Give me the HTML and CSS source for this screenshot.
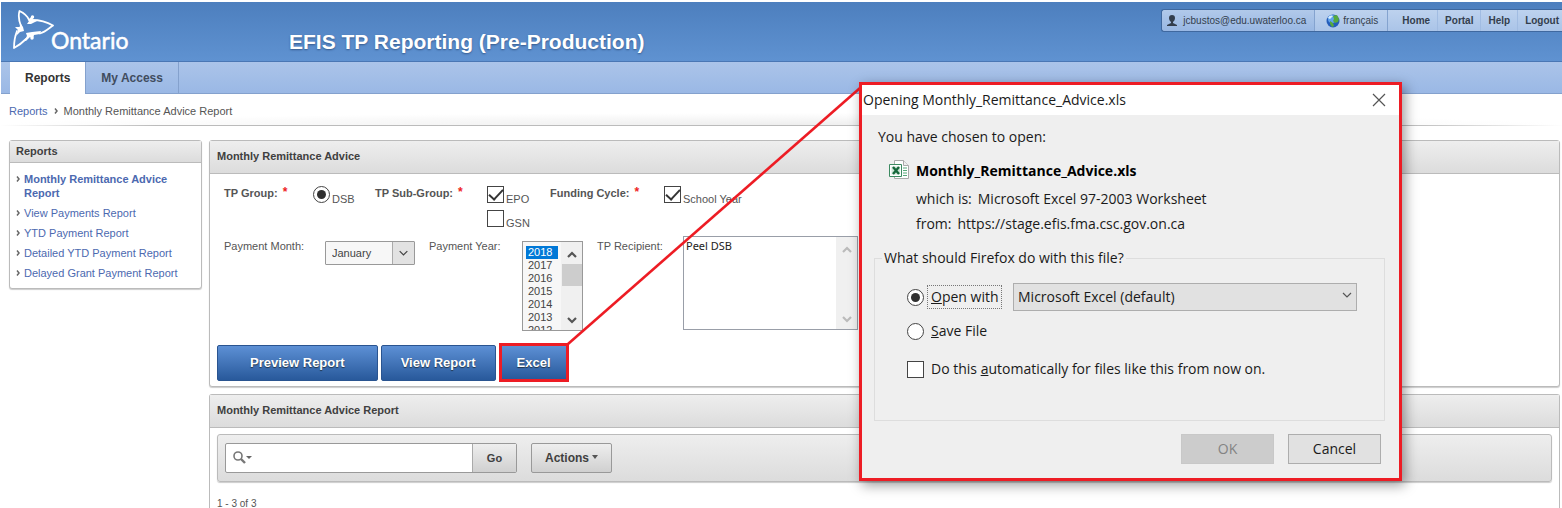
FILE: index.html
```html
<!DOCTYPE html>
<html lang="en">
<head>
<meta charset="utf-8">
<title>EFIS TP Reporting</title>
<link rel="stylesheet" href="styles.css">
</head>
<body>
<header class="banner">
  <a class="logo" href="#" aria-label="Ontario">
    <svg class="trillium" viewBox="0 0 42 40" aria-hidden="true">
      <g fill="none" stroke="#fff" stroke-width="1.8" stroke-linejoin="round" stroke-linecap="round">
        <path d="M9 16C7 11 6 6 7.500 1C12 3 15 5 17 10"/>
        <path d="M20 10C28 10 35 12 41 15.500C36 19 33 22 28 23.500"/>
        <path d="M5 21C3 26 2 32 2 38C6 36 10 33 14 29"/>
      </g>
      <g fill="#fff">
        <path d="M14 5L17 9 20 6 22 7 20 10 25 11 19 14 15 14 17 11Z"/>
        <path d="M3 17L8 17 9 14 11 17 12 21 8 22 4 26 6 20Z"/>
        <path d="M14 23L20 22 29 21 28 24 22 25 21 29 18 27 14 31 12 31 15 26Z"/>
        <circle cx="20.500" cy="7" r="1.700"/><circle cx="8.500" cy="18" r="1.700"/><circle cx="20" cy="28" r="1.700"/>
      </g>
    </svg>
    <span class="wordmark">Ontario</span>
  </a>
  <h1 class="title">EFIS TP Reporting (Pre-Production)</h1>
  <nav class="userbar" aria-label="Account">
    <span class="user">
      <svg class="person" viewBox="0 0 12 12" aria-hidden="true"><path fill="#333e4d" d="M6 0C8 0 9 1 9 3S8 6 7 7V8L11 10V11H1V10L5 8V7C4 6 3 5 3 3S4 0 6 0Z"/></svg>
      jcbustos@edu.uwaterloo.ca
    </span>
    <a class="lang" href="#">
      <svg class="globe" viewBox="0 0 14 14" aria-hidden="true"><circle cx="7" cy="7" r="6.5" fill="#245dba"/><circle cx="6" cy="5" r="4" fill="#5fa2ed"/><path fill="#56a93c" d="M7 2L11 1 13 5 12 8 9 9 7 7 8 5ZM4 7L7 9 8 12 6 13 4 10Z"/><path fill="#d9efff" d="M2 4C3 1 6 1 7 2L4 5Z"/></svg>
      français
    </a>
    <a class="userlink first" href="#">Home</a>
    <a class="userlink" href="#">Portal</a>
    <a class="userlink" href="#">Help</a>
    <a class="userlink" href="#">Logout</a>
  </nav>
</header>
<nav class="tabs" aria-label="Main">
  <a class="tab current" href="#">Reports</a>
  <a class="tab" href="#">My Access</a>
</nav>
<div class="crumbs">
  <a href="#">Reports</a>
  <svg class="chev" viewBox="0 0 4 6" aria-hidden="true"><path d="M1 0.5L3 3 1 5.5"/></svg>
  <span>Monthly Remittance Advice Report</span>
</div>
<div class="columns">
  <aside class="panel side">
    <h2 class="panel-head small">Reports</h2>
    <ul class="links">
      <li><svg class="chev" viewBox="0 0 4 6" aria-hidden="true"><path d="M1 0.5L3 3 1 5.5"/></svg><a class="active" href="#">Monthly Remittance Advice Report</a></li>
      <li><svg class="chev" viewBox="0 0 4 6" aria-hidden="true"><path d="M1 0.5L3 3 1 5.5"/></svg><a href="#">View Payments Report</a></li>
      <li><svg class="chev" viewBox="0 0 4 6" aria-hidden="true"><path d="M1 0.5L3 3 1 5.5"/></svg><a href="#">YTD Payment Report</a></li>
      <li><svg class="chev" viewBox="0 0 4 6" aria-hidden="true"><path d="M1 0.5L3 3 1 5.5"/></svg><a href="#">Detailed YTD Payment Report</a></li>
      <li><svg class="chev" viewBox="0 0 4 6" aria-hidden="true"><path d="M1 0.5L3 3 1 5.5"/></svg><a href="#">Delayed Grant Payment Report</a></li>
    </ul>
  </aside>
  <main class="content">
    <section class="panel">
      <h2 class="panel-head">Monthly Remittance Advice</h2>
      <form class="form">
        <div class="row groups">
          <span class="label strong">TP Group: <b class="req">*</b></span>
          <label class="choice"><input class="radio" type="radio" name="group" checked><span>DSB</span></label>
          <span class="label strong">TP Sub-Group: <b class="req">*</b></span>
          <div class="stack">
            <label class="choice"><input class="check" type="checkbox" checked><span>EPO</span></label>
            <label class="choice"><input class="check" type="checkbox"><span>GSN</span></label>
          </div>
          <span class="label strong">Funding Cycle: <b class="req">*</b></span>
          <label class="choice"><input class="check" type="checkbox" checked><span>School Year</span></label>
        </div>
        <div class="row period">
          <label class="label" for="month">Payment Month:</label>
          <div class="month">
            <select id="month"><option>January</option></select>
            <svg class="month-arrow" viewBox="0 0 22 22" aria-hidden="true"><path d="M7 9L11 13 15 9"/></svg>
          </div>
          <label class="label" for="year">Payment Year:</label>
          <div class="year">
            <select id="year" multiple size="7">
              <option selected>2018</option><option>2017</option><option>2016</option><option>2015</option><option>2014</option><option>2013</option><option>2012</option>
            </select>
            <div class="scroll" aria-hidden="true">
              <svg viewBox="0 0 12 8"><path d="M2 6L6 2 10 6"/></svg>
              <span class="thumb"></span>
              <svg viewBox="0 0 12 8"><path d="M2 2L6 6 10 2"/></svg>
            </div>
          </div>
          <label class="label" for="recipient">TP Recipient:</label>
          <div class="recipient">
            <textarea id="recipient">Peel DSB</textarea>
            <div class="scroll faint" aria-hidden="true">
              <svg viewBox="0 0 12 8"><path d="M2 6L6 2 10 6"/></svg>
              <svg viewBox="0 0 12 8"><path d="M2 2L6 6 10 2"/></svg>
            </div>
          </div>
        </div>
        <div class="actions">
          <button class="blue wide" type="button">Preview Report</button>
          <button class="blue" type="button">View Report</button>
          <button class="blue marked" type="button">Excel</button>
        </div>
      </form>
    </section>
    <section class="panel open">
      <h2 class="panel-head">Monthly Remittance Advice Report</h2>
      <div class="toolbar">
        <div class="search">
          <svg class="lens" viewBox="0 0 20 14" aria-hidden="true"><circle cx="5" cy="5" r="4" fill="none" stroke="#777" stroke-width="1.6"/><path d="M8 8L12 12" stroke="#777" stroke-width="2.4"/><path d="M13 5H19L16 8Z" fill="#666"/></svg>
          <input class="query" type="text" aria-label="Search report">
          <button class="grey go" type="button">Go</button>
        </div>
        <button class="grey menu" type="button">Actions <svg class="caret" viewBox="0 0 6 4" aria-hidden="true"><path d="M0 0H6L3 4Z" fill="#555"/></svg></button>
      </div>
      <p class="count">1 - 3 of 3</p>
    </section>
  </main>
</div>
<svg class="pointer" viewBox="0 0 294 260" aria-hidden="true"><path d="M1 258L293 2" fill="none" stroke="#ed1c24" stroke-width="2.6"/></svg>
<div class="dialog" role="dialog" aria-labelledby="dialog-title">
  <div class="dialog-bar">
    <span id="dialog-title">Opening Monthly_Remittance_Advice.xls</span>
    <button class="close" type="button" aria-label="Close"><svg viewBox="0 0 14 14"><path d="M1 1L13 13M13 1L1 13" stroke="#555" stroke-width="1.2"/></svg></button>
  </div>
  <p class="chosen">You have chosen to open:</p>
  <div class="file">
    <svg class="xls" viewBox="0 0 20 19" aria-hidden="true">
      <path d="M5.500.5H14.500L19.500 5.500V18.500H5.500Z" fill="#fff" stroke="#aaa"/><path d="M14.500.5V5.500H19.500" fill="#eee" stroke="#aaa"/>
      <path d="M14 8H18M14 10.500H18M14 13H18M14 15.500H18" stroke="#58a97b" stroke-width="1.2"/>
      <path d="M.5 4.500H12.500V16.500H.5Z" fill="#fff" stroke="#3c8a61"/><path d="M2.500 6.500H11V14.500H2.500Z" fill="#cfe5d8"/>
      <path d="M4 7L10 14M10 7L4 14" stroke="#17683c" stroke-width="2.4"/>
    </svg>
    <div class="details">
      <strong class="filename">Monthly_Remittance_Advice.xls</strong>
      <span class="detail"><span>which is:</span><span>Microsoft Excel 97-2003 Worksheet</span></span>
      <span class="detail"><span>from:</span><span>https://stage.efis.fma.csc.gov.on.ca</span></span>
    </div>
  </div>
  <fieldset class="ask">
    <legend>What should Firefox do with this file?</legend>
    <div class="option">
      <input class="radio" type="radio" name="do" id="openwith" checked>
      <label class="focus" for="openwith"><u>O</u>pen with</label>
      <div class="app">
        <select aria-label="Application"><option>Microsoft Excel (default)</option></select>
        <svg class="app-arrow" viewBox="0 0 10 6" aria-hidden="true"><path d="M1 1L5 5 9 1"/></svg>
      </div>
    </div>
    <div class="option">
      <input class="radio" type="radio" name="do" id="save">
      <label for="save"><u>S</u>ave File</label>
    </div>
    <div class="option last">
      <input class="check" type="checkbox" id="auto">
      <label for="auto">Do this <u>a</u>utomatically for files like this from now on.</label>
    </div>
  </fieldset>
  <div class="dialog-buttons">
    <button class="flat" type="button" disabled>OK</button>
    <button class="flat" type="button">Cancel</button>
  </div>
</div>
</body>
</html>
```
FILE: styles.css
```css
* { box-sizing: border-box; }
body {
  margin: 0;
  padding: 2px 0 0 1px;
  position: relative;
  background: #fff;
  color: #555;
  font: 11px/14px "Liberation Sans", Arial, sans-serif;
}
h1, h2, p, ul { margin: 0; padding: 0; }
a { color: #4c69b0; text-decoration: none; }
button, input, select, textarea { font: inherit; margin: 0; border-radius: 0; }

.banner {
  display: flex;
  align-items: flex-start;
  height: 60px;
  padding-left: 11px;
  background: linear-gradient(#4d7fbe, #5f92d1);
  border-bottom: 1px solid #4a77b4;
}
.logo { display: flex; width: 277px; padding-top: 8px; color: #fff; }
.trillium { width: 42px; height: 40px; }
.wordmark { margin-left: -3px; padding-top: 17px; font: 23px/26px Lato, sans-serif; -webkit-text-stroke: 0.5px #fff; }
.title { padding-top: 27px; color: #fff; font-size: 21px; line-height: 26px; text-shadow: 0 1px 2px #35598c; white-space: nowrap; }
.userbar {
  display: flex;
  height: 23px;
  margin: 7px 0 0 auto;
  border: 1px solid #3f689f;
  border-right: 0;
  border-radius: 3px 0 0 3px;
  background: linear-gradient(#b1c9ea, #98b7e3);
  font-size: 10px;
  line-height: 21px;
  color: #333e4d;
  white-space: nowrap;
}
.user, .lang { display: flex; align-items: center; }
.user { gap: 5px; padding: 0 8px 0 4px; }
.person { width: 12px; height: 12px; }
.lang { gap: 3px; padding: 0 9px 0 11px; border: solid #84a3cf; border-width: 0 1px; background: linear-gradient(#bdd2ee, #aac4e8); color: #333e4d; }
.globe { width: 14px; height: 14px; }
.userlink { padding: 0 7px; border-right: 1px solid #a1bce2; background: linear-gradient(#bdd2ee, #aac4e8); color: #333e4d; font-weight: bold; }
.userlink.first { padding-left: 14px; }
.userlink:last-child { padding-right: 3px; border: 0; }

.tabs { display: flex; height: 32px; padding-left: 9px; background: linear-gradient(#abc4e9, #9ab8e5); border-bottom: 1px solid #84a1cd; }
.tab { height: 31px; padding: 0 15px; border-right: 1px solid #84a1cd; font: bold 12px/32px "Liberation Sans", Arial, sans-serif; color: #404c5e; }
.tab.current { height: 32px; background: #fff; color: #333; }

.crumbs {
  display: flex;
  align-items: center;
  gap: 6px;
  height: 32px;
  padding: 3px 8px 0;
  border-bottom: 1px solid;
  border-image: linear-gradient(90deg, #fff, #bbb 10%, #bbb 90%, #fff) 1;
  background: radial-gradient(ellipse 50% 12px at 50% 100%, #eee, #fff);
}
.chev { flex: none; width: 4px; height: 6px; fill: none; stroke: #666; stroke-width: 1.5; }

.columns { display: flex; align-items: flex-start; gap: 7px; padding: 14px 2px 0 8px; }
.panel { border: 1px solid #bbb; border-radius: 3px; background: #fff; box-shadow: 0 1px 1px #ccc; }
.side { flex: none; width: 193px; }
.panel-head { height: 33px; padding: 0 7px; border-bottom: 1px solid #bbb; background: linear-gradient(#eee, #dcdcdc); color: #404040; font-size: 11px; line-height: 31px; }
.panel-head.small { height: 22px; line-height: 20px; padding: 0 6px; }
.links { display: flex; flex-direction: column; gap: 6px; padding: 9px 6px 8px; list-style: none; }
.links li { display: flex; gap: 4px; }
.links .chev { margin-top: 4px; }
.links .active { font-weight: bold; }

.content { flex: 1; display: flex; flex-direction: column; gap: 7px; min-width: 0; }
.form { padding: 12px 7px 4px; }
.row { display: grid; align-items: start; padding-left: 7px; }
.groups { grid-template-columns: 89px 62px 112px 63px 114px auto; }
.period { grid-template-columns: 101px 104px 93px 75px 86px 175px; padding-top: 6px; }
.label { white-space: nowrap; }
.period .label { padding-top: 3px; }
.strong { font-weight: bold; }
.req { color: #e22; margin-left: 2px; font-size: 12px; vertical-align: 1px; line-height: 1; }
.choice { display: flex; align-items: flex-end; gap: 2px; height: 20px; white-space: nowrap; }
.choice input { align-self: flex-start; }
.stack { display: flex; flex-direction: column; gap: 4px; }
.radio, .check { appearance: none; flex: none; display: grid; place-items: center; width: 17px; height: 17px; border: 1px solid #444; background: #fff; }
.radio { border-radius: 50%; }
.radio:checked::after { content: ""; width: 9px; height: 9px; border-radius: 50%; background: #303030; }
.check:checked::after { content: ""; width: 12px; height: 6px; margin-top: -4px; border: solid #333; border-width: 0 0 2px 2px; transform: rotate(-47deg); }

.month { position: relative; width: 90px; height: 24px; margin-top: 5px; }
.month select { appearance: none; width: 100%; height: 100%; padding: 0 6px; border: 1px solid #999; border-radius: 1px; background: #f7f7f7; color: #444; }
.month-arrow { position: absolute; right: 1px; top: 1px; width: 22px; height: 22px; border-left: 1px solid #aaa; background: #e2e2e2; fill: none; stroke: #444; stroke-width: 1.3; pointer-events: none; }
.year { display: flex; width: 61px; height: 90px; margin-top: 5px; border: 1px solid #999; background: #f7f7f7; overflow: hidden; }
.year select { appearance: none; width: 38px; height: 100px; padding: 4px 3px 0; border: 0; outline: 0; background: none; overflow: hidden; color: #444; font-size: 11px; }
.year option { min-height: 0; height: 13px; padding: 0 2px; line-height: 13px; font-size: 11px; }
.year option:checked { background: #0078d7 linear-gradient(#0078d7, #0078d7); -webkit-text-fill-color: #fff; }
.scroll { display: flex; flex-direction: column; align-items: center; width: 21px; padding: 9px 0 6px; background: #f0f0f0; }
.scroll svg { width: 12px; height: 8px; fill: none; stroke: #555; stroke-width: 2.2; }
.scroll svg:last-child { margin-top: auto; }
.scroll.faint svg { stroke: #bbb; }
.thumb { width: 20px; height: 22px; margin-top: 5px; background: #cdcdcd; }
.recipient { display: flex; height: 94px; border: 1px solid #999ea8; }
.recipient textarea { flex: 1; min-width: 0; padding: 2px; border: 0; resize: none; color: #222; font: 11px/14px "Noto Sans", sans-serif; overflow: hidden; }

.actions { display: flex; align-items: center; gap: 3px; margin-top: 12px; }
.blue { height: 36px; padding: 0 19px; border: 1px solid #2a5490; border-radius: 2px; background: linear-gradient(#5d90d5, #28599b); color: #fff; font-size: 13px; font-weight: bold; text-shadow: 0 1px 1px #234; white-space: nowrap; }
.wide { padding: 0 32px; }
.marked { height: 39px; padding: 0 15px; border: 3px solid #ed1c24; border-radius: 0; }

.open { border-bottom: 0; border-radius: 3px 3px 0 0; box-shadow: none; }
.toolbar { display: flex; gap: 14px; margin: 6px 7px 0; padding: 8px 7px; border: 1px solid #bbb; border-radius: 3px; background: linear-gradient(#eee, #dcdcdc); box-shadow: 0 1px 1px #ccc; }
.search { display: flex; align-items: center; width: 292px; height: 30px; border: 1px solid #999; border-radius: 2px; background: #fff; }
.lens { flex: none; width: 20px; height: 14px; margin-left: 7px; }
.query { flex: 1; min-width: 0; height: 24px; border: 0; background: none; }
.grey { border: 1px solid #aaa; border-radius: 2px; background: linear-gradient(#eee, #d0d0d0); color: #404040; font-weight: bold; }
.go { width: 44px; height: 28px; border-width: 0 0 0 1px; border-radius: 0; }
.menu { height: 30px; padding: 0 13px; font-size: 12px; border-color: #999; }
.caret { width: 6px; height: 4px; margin-bottom: 3px; }
.count { padding: 16px 7px 0; font-size: 10px; line-height: 12px; }

.pointer { position: absolute; left: 567px; top: 86px; width: 294px; height: 260px; pointer-events: none; }
.dialog {
  position: absolute;
  left: 859px;
  top: 82px;
  width: 543px;
  border: 3px solid #ed1c24;
  background: #efefef;
  box-shadow: 3px 4px 12px rgba(0, 0, 0, 0.4);
  color: #1a1a1a;
  font: 14px/20px "Open Sans", "Noto Sans", sans-serif;
}
.dialog-bar { display: flex; justify-content: space-between; align-items: center; height: 30px; padding: 0 13px 0 1px; background: #fff; }
.close { display: grid; padding: 0; border: 0; background: none; }
.close svg { width: 14px; height: 14px; }
.chosen { padding: 12px 16px 0; }
.file { display: flex; gap: 7px; padding: 10px 27px 0; }
.xls { flex: none; width: 20px; height: 19px; margin-top: 3px; }
.details { display: flex; flex-direction: column; gap: 5px; line-height: 20px; }
.filename { color: #000; padding: 4px 0 3px; }
.detail { display: flex; gap: 6px; }
.ask { margin: 14px 14px 0 12px; padding: 15px 27px 41px 32px; border: 1px solid #ddd; min-width: 0; }
.ask legend { margin-left: -25px; padding: 0 2px; }
.option { display: flex; align-items: center; gap: 7px; min-height: 20px; margin-bottom: 10px; }
.option.last { margin: 18px 0 0; }
.focus { width: 73px; margin-right: 5px; margin-left: -3px; padding: 1px 0 1px 3px; outline: 1px dotted #777; white-space: nowrap; }
.app { position: relative; flex: 1; height: 28px; }
.app select { appearance: none; width: 100%; height: 100%; padding: 0 4px; border: 1px solid #adadad; background: #e1e1e1; color: #1a1a1a; }
.app-arrow { position: absolute; right: 5px; top: 9px; width: 10px; height: 6px; fill: none; stroke: #555; stroke-width: 1.2; pointer-events: none; }
.dialog-buttons { display: flex; justify-content: flex-end; gap: 14px; padding: 13px 18px 14px; }
.flat { width: 93px; height: 30px; border: 1px solid #adadad; background: #e1e1e1; color: #1a1a1a; }
.flat:disabled { border-color: #c8c8c8; background: #ccc; color: #838383; }
```
